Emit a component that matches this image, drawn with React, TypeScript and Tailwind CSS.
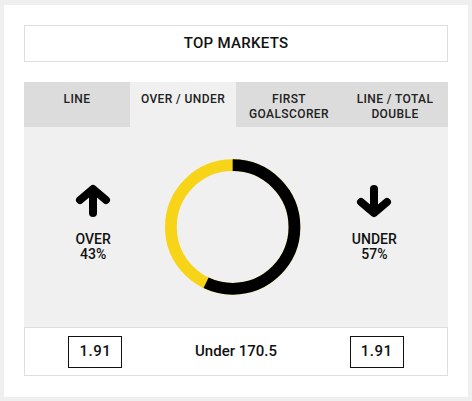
const tabs = [
  { label: 'LINE', active: false },
  { label: 'OVER / UNDER', active: true },
  { label: 'FIRST GOALSCORER', active: false },
  { label: 'LINE / TOTAL DOUBLE', active: false },
]

function Arrow({ down = false }: { down?: boolean }) {
  return (
    <svg width="36" height="34" viewBox="0 0 36 34" className={down ? 'rotate-180' : ''}>
      <g fill="none" stroke="#000" strokeWidth="8" strokeLinecap="round" strokeLinejoin="round">
        <path d="M18 6V29" />
        <path d="M5 16L18 5L31 16" />
      </g>
    </svg>
  )
}

function Donut({ over }: { over: number }) {
  const r = 63
  const c = 2 * Math.PI * r
  const under = 100 - over
  return (
    <svg width="138" height="138" viewBox="0 0 138 138">
      <circle cx="69" cy="69" r={r} fill="none" stroke="#f7d417" strokeWidth="12" />
      <circle
        cx="69"
        cy="69"
        r={r}
        fill="none"
        stroke="#000"
        strokeWidth="12"
        strokeDasharray={`${(c * under) / 100} ${c}`}
        transform="rotate(-90 69 69)"
      />
    </svg>
  )
}

function Side({ label, pct, down }: { label: string; pct: number; down?: boolean }) {
  return (
    <div className="mb-[8px] flex flex-col items-center">
      <Arrow down={down} />
      <div className="mt-[14px] text-center text-[14px] font-medium leading-[15px] text-[#111]">
        <div>{label}</div>
        <div>{pct}%</div>
      </div>
    </div>
  )
}

export default function App() {
  return (
    <div className="min-h-screen bg-[#efefef] px-[4px] pt-[5px] pb-[4px] font-['Roboto',sans-serif]">
      <div className="bg-white px-[20px] pt-[20px] pb-[21px]">
        <div className="flex h-[37px] items-center justify-center border border-[#dedede] text-[15px] font-medium tracking-[0.3px] text-[#111]">
          TOP MARKETS
        </div>

        <div className="mt-[20px] grid grid-cols-4">
          {tabs.map((t) => (
            <div
              key={t.label}
              className={`h-[45px] px-[6px] pt-[10px] text-center text-[12px] font-medium leading-[15px] tracking-[0.4px] text-[#222] ${
                t.active ? 'bg-[#f0f0f0]' : 'bg-[#dcdcdc]'
              }`}
            >
              {t.label}
            </div>
          ))}
        </div>

        <div className="grid h-[200px] grid-cols-3 items-center bg-[#f0f0f0]">
          <div className="flex justify-center pr-[3px]">
            <Side label="OVER" pct={43} />
          </div>
          <div className="flex justify-center pr-[6px]">
            <Donut over={43} />
          </div>
          <div className="flex justify-center pr-[6px]">
            <Side label="UNDER" pct={57} down />
          </div>
        </div>

        <div className="grid h-[49px] grid-cols-3 items-center border border-[#dedede] text-[#111]">
          <div className="flex justify-center">
            <div className="flex h-[32px] w-[54px] items-center justify-center border border-[#111] text-[15px] font-medium tracking-[0.5px]">
              1.91
            </div>
          </div>
          <div className="text-center text-[15px] font-medium">Under 170.5</div>
          <div className="flex justify-center">
            <div className="flex h-[32px] w-[54px] items-center justify-center border border-[#111] text-[15px] font-medium tracking-[0.5px]">
              1.91
            </div>
          </div>
        </div>
      </div>
    </div>
  )
}
